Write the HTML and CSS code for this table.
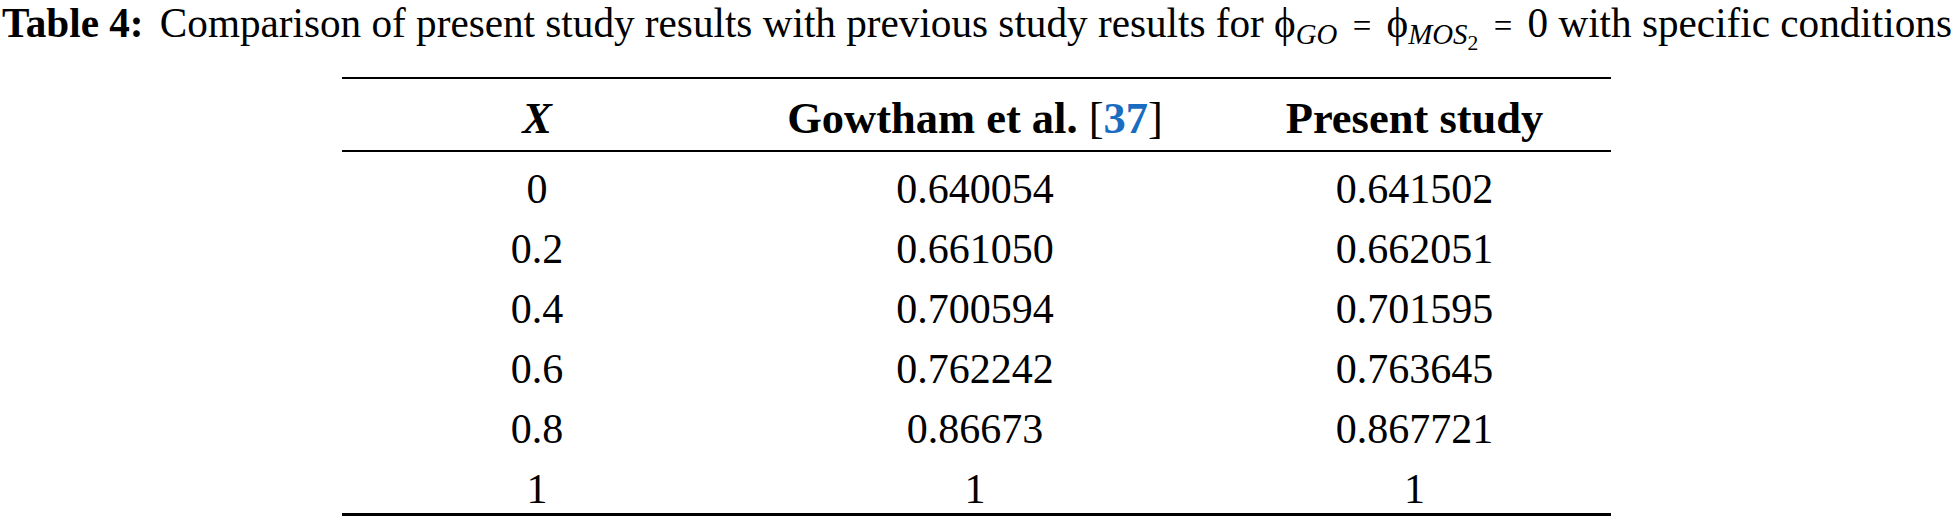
FILE: index.html
```html
<!DOCTYPE html>
<html lang="en">
<head>
    <meta charset="UTF-8">
    <meta name="viewport" content="width=device-width, initial-scale=1.0">
    <title>Table 4</title>
    <link rel="stylesheet" href="styles.css">
</head>
<body>
    <div class="table-wrap">
        <p class="caption">
            <span class="caption-label">Table 4:</span>
            Comparison of present study results with previous study results for
            <span class="math">ϕ<sub class="sub">GO</sub></span>
            <span class="eq">=</span>
            <span class="math">ϕ<sub class="sub">MOS<sub class="subsub">2</sub></sub></span>
            <span class="eq">=</span> 0 with specific conditions
        </p>

        <table class="results">
            <thead>
                <tr>
                    <th class="col-x"><em>X</em></th>
                    <th class="col-ref">Gowtham et al. <span class="bracket">[</span><a href="#ref37" class="ref">37</a><span class="bracket">]</span></th>
                    <th class="col-present">Present study</th>
                </tr>
            </thead>
            <tbody>
                <tr><td>0</td><td>0.640054</td><td>0.641502</td></tr>
                <tr><td>0.2</td><td>0.661050</td><td>0.662051</td></tr>
                <tr><td>0.4</td><td>0.700594</td><td>0.701595</td></tr>
                <tr><td>0.6</td><td>0.762242</td><td>0.763645</td></tr>
                <tr><td>0.8</td><td>0.86673</td><td>0.867721</td></tr>
                <tr><td>1</td><td>1</td><td>1</td></tr>
            </tbody>
        </table>
    </div>
</body>
</html>
```

FILE: styles.css
```css
* {
    margin: 0;
    padding: 0;
    box-sizing: border-box;
}

body {
    font-family: "Liberation Serif", "Times New Roman", serif;
    background: #ffffff;
    color: #000000;
    font-size: 42px;
}

.caption {
    font-size: 41.2px;
    line-height: 46px;
    white-space: nowrap;
    padding-left: 2px;
}

.caption-label {
    font-weight: bold;
    margin-right: 6px;
}

.math {
    font-style: normal;
}

.sub {
    font-style: italic;
    font-size: 0.7em;
    vertical-align: -0.25em;
    line-height: 0;
}

.subsub {
    font-style: normal;
    font-size: 0.75em;
    vertical-align: -0.3em;
    line-height: 0;
}

.eq {
    font-size: 0.8em;
    margin: 0 5px;
}

.results {
    width: 1269px;
    margin: 28px auto 0;
    border-collapse: separate;
    border-spacing: 0;
    text-align: center;
}

.col-x {
    width: 390px;
}

.col-ref {
    width: 486px;
}

th {
    font-size: 44.5px;
    font-weight: bold;
    line-height: 44px;
    padding: 17px 0 10px;
    border-top: 2px solid #000;
    border-bottom: 2px solid #000;
}

th em {
    font-style: italic;
}

.bracket {
    font-weight: normal;
}

.ref {
    color: #1a6cc0;
    text-decoration: none;
}

td {
    font-weight: normal;
    line-height: 42px;
    padding: 9px 0;
}

tbody tr:first-child td {
    padding-top: 16px;
}

tbody tr:last-child td {
    padding-bottom: 3px;
    border-bottom: 3px solid #000;
}
```
